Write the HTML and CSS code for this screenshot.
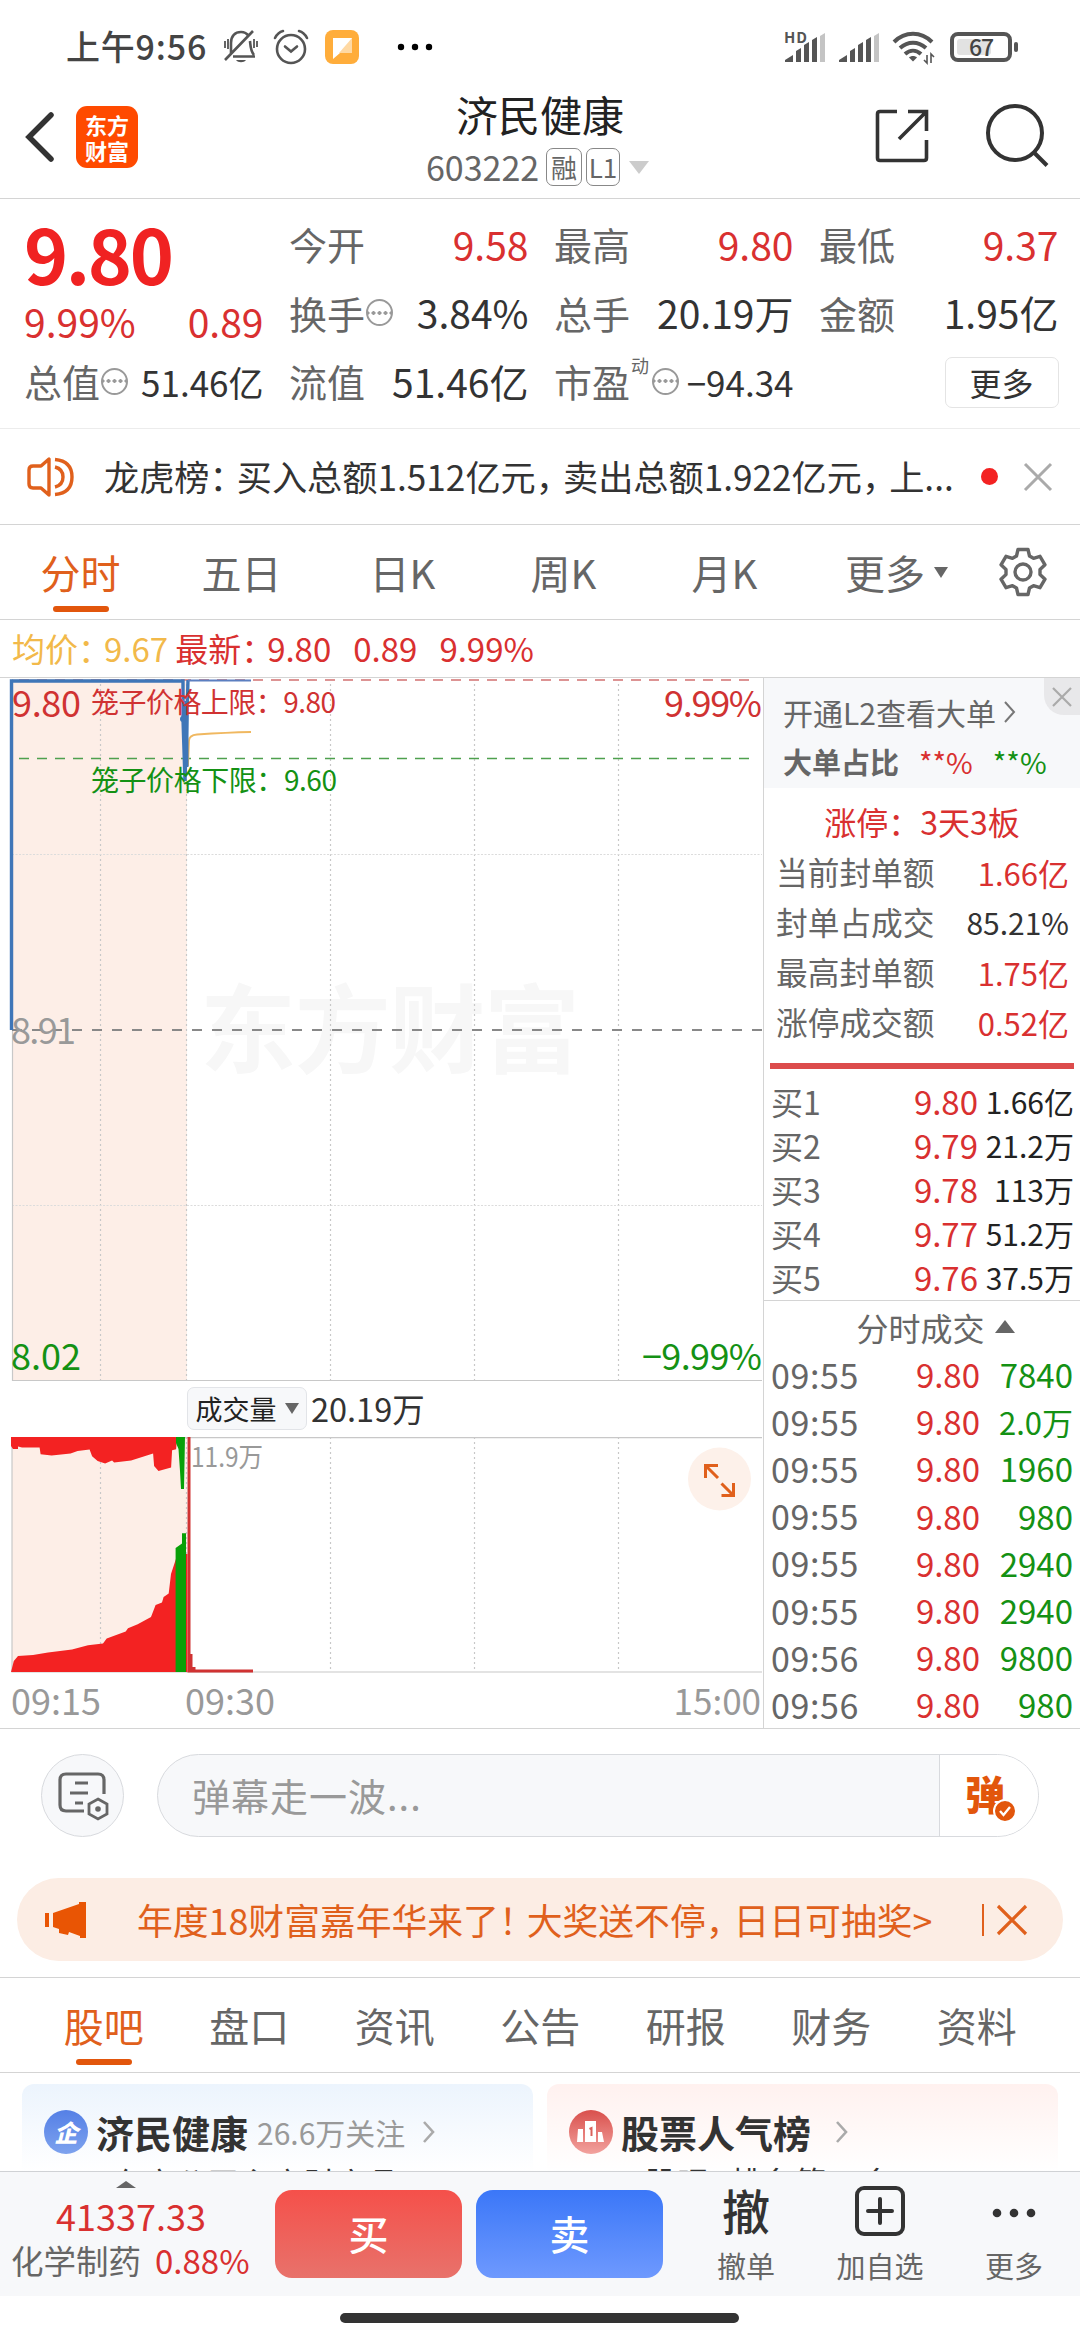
FILE: index.html
```html
<!DOCTYPE html>
<html lang="zh-CN">
<head>
  <meta charset="UTF-8" />
  <title>济民健康 603222</title>
  <link rel="stylesheet" href="styles.css">
</head>
<body>
  <div class="statusbar">
    <span class="clock">上午9:56</span>
    <svg class="st-bell" width="36" height="36" viewBox="0 0 36 36" fill="none" stroke="#555" stroke-width="2.6">
      <path d="M8 25V14C8 7 12 3 18 3c3 0 6 1.500 7.500 4M27 12c.6 6 .5 10 4 14M10 27.500h22M30 2 2 31"/>
      <path d="M2 12v7M5 10v10M31 10v9M34 12v6" stroke-width="1.800"/>
      <path d="M13 31h10c-2 3-8 3-10 0z" fill="#555" stroke="none"/>
    </svg>
    <svg class="st-alarm" width="36" height="36" viewBox="0 0 36 36" fill="none" stroke="#555" stroke-width="2.600">
      <circle cx="18" cy="20" r="14"/>
      <path d="M12 17.500l6 5 6-5M2 9c2-4 4-6 8-7M34 9c-2-4-4-6-8-7" stroke-linecap="round"/>
    </svg>
    <svg class="st-app" width="34" height="34" viewBox="0 0 34 34">
      <rect width="34" height="34" rx="8" fill="#ffad3b"/>
      <path d="M8 8h19v15H15l-7 6z" fill="#fff"/><path d="M27 8v15H14z" fill="#ffd9a3"/>
    </svg>
    <svg width="36" height="8" viewBox="0 0 36 8"><circle cx="4" cy="4" r="3.200"/><circle cx="18" cy="4" r="3.200"/><circle cx="32" cy="4" r="3.200"/></svg>
    <div class="st-right">
      <svg width="42" height="34" viewBox="0 0 42 34" fill="#555">
        <text x="0" y="13" font-size="15" font-weight="700" textLength="23">HD</text>
        <path d="M1 32v-2l8-5v7zM12 32V21l5-3v14zM20 32V15l5-3v20zM28 32V10l5-3v25z"/><path d="M36 32V6l5-3v29z" fill="#c4c4c4"/>
      </svg>
      <svg width="42" height="34" viewBox="0 0 42 34" fill="#555">
        <path d="M1 32v-2l8-5v7zM12 32V21l5-3v14zM20 32V15l5-3v20zM28 32V10l5-3v25z"/><path d="M36 32V6l5-3v29z" fill="#c4c4c4"/>
      </svg>
      <svg width="44" height="36" viewBox="0 0 44 36" fill="none" stroke="#555" stroke-width="4">
        <path d="M2 13c11-11 27-11 38 0M8 19c8-7 18-7 26 0M13 25c5-4.500 11-4.500 16 0"/>
        <path d="M17 28.500c2-2 6-2 8 0l-4 4z" fill="#555" stroke="none"/>
        <path d="M35 26v8l-3-3M39 34v-9l3 3" stroke-width="1.600"/>
      </svg>
      <svg class="battery" width="70" height="32" viewBox="0 0 70 32">
        <rect x="2" y="3" width="58" height="26" rx="6" fill="#fff" stroke="#555" stroke-width="4"/>
        <rect x="7" y="8" width="34" height="16" rx="3" fill="#e2e2e2"/>
        <rect x="64" y="11" width="4" height="10" rx="2" fill="#555"/>
        <text x="19" y="24.500" font-size="23" font-weight="500" fill="#444" textLength="25">67</text>
      </svg>
    </div>
  </div>

  <header class="header">
    <svg class="back" width="30" height="52" viewBox="0 0 30 52" fill="none" stroke="#333" stroke-width="5.500" stroke-linecap="round"><path d="M26 4 4 26l22 22"/></svg>
    <div class="logo"><span>东方</span><span>财富</span></div>
    <div class="title">
      <h1>济民健康</h1>
      <div class="sub"><span class="code">603222</span><span class="tag">融</span><span class="tag l1">L1</span><i class="tri-down"></i></div>
    </div>
    <svg class="share" width="54" height="54" viewBox="0 0 54 54" fill="none" stroke="#333" stroke-width="3.600"><path d="M22 2.500H5q-2.500 0-2.500 2.500v44q0 2.500 2.500 2.500h44q2.500 0 2.500-2.500V31M33 2.500h18.500V22M51 3 24 30"/></svg>
    <svg class="search" width="64" height="64" viewBox="0 0 64 64" fill="none" stroke="#333" stroke-width="4"><circle cx="29" cy="29" r="27"/><path d="M47.500 48 61 61.500"/></svg>
  </header>

  <section class="quote">
    <div class="col col-price">
      <div class="price">9.80</div>
      <div class="row change red"><span>9.99%</span><span>0.89</span></div>
      <div class="row"><label>总值<i class="more-dot"></i></label><span class="sm">51.46亿</span></div>
    </div>
    <div class="col">
      <div class="row"><label>今开</label><span class="red">9.58</span></div>
      <div class="row"><label>换手<i class="more-dot"></i></label><span>3.84%</span></div>
      <div class="row"><label>流值</label><span>51.46亿</span></div>
    </div>
    <div class="col">
      <div class="row"><label>最高</label><span class="red">9.80</span></div>
      <div class="row"><label>总手</label><span>20.19万</span></div>
      <div class="row"><label>市盈<sup>动</sup><i class="more-dot"></i></label><span class="sm">−94.34</span></div>
    </div>
    <div class="col">
      <div class="row"><label>最低</label><span class="red">9.37</span></div>
      <div class="row"><label>金额</label><span>1.95亿</span></div>
      <div class="row end"><button class="btn-more">更多</button></div>
    </div>
  </section>

  <section class="notice">
    <svg class="speaker" width="48" height="42" viewBox="0 0 48 42" fill="none" stroke="#e0601c" stroke-width="3.400" stroke-linejoin="round"><path d="M22 3v36l-8-7H6q-4 0-4-4V14q0-4 4-4h8zM28 11q8 2 8 10t-8 10M28 3.500q17 1.500 17 17.500T28 38.500"/></svg>
    <p>龙虎榜<b>：</b>买入总额1.512亿元<b>，</b>卖出总额1.922亿元<b>，</b>上...</p>
    <i class="dot"></i>
    <svg width="28" height="28" viewBox="0 0 28 28" stroke="#aaa" stroke-width="3"><path d="M1 1l26 26M27 1 1 27"/></svg>
  </section>

  <nav class="tabs">
    <a class="on">分时</a><a>五日</a><a>日K</a><a>周K</a><a>月K</a>
    <a class="tab-more">更多<i class="tri-s"></i></a>
    <svg class="gear" width="50" height="50" viewBox="0 0 50 50" fill="none" stroke="#666" stroke-width="3.400" stroke-linejoin="round">
      <path d="M20 2.500h10l1.500 6.500 4 2.300 6.500-2 5 8.500-5 4.600v5.200l5 4.600-5 8.500-6.500-2-4 2.300-1.500 6.500H20l-1.500-6.500-4-2.300-6.500 2-5-8.500 5-4.600v-5.200l-5-4.600 5-8.500 6.500 2 4-2.300z"/><circle cx="25" cy="25" r="8"/>
    </svg>
  </nav>

  <div class="legend"><span class="avg">均价<b>：</b>9.67</span><span>最新<b>：</b>9.80</span><span>0.89</span><span>9.99%</span></div>

  <main class="board">
    <div class="charts">
      <!-- 分时走势 -->
      <svg width="763" height="703" viewBox="0 677 763 703">
        <rect x="12" y="678" width="175" height="701" fill="#fdeee7"/>
        <text class="mark" x="200" y="1064" font-size="96" font-weight="700" textLength="380">东方财富</text>
        <g stroke="#c8c8c8" stroke-width="1.200" stroke-dasharray="2 3">
          <path d="M100.500 678V1379M186.500 678V1379M330.500 678V1379M474.500 678V1379M618.500 678V1379"/>
          <path d="M12 853.500H762M12 1204.500H762" stroke-dasharray="2 1.500" stroke="#dcdcdc"/>
        </g>
        <path d="M12.500 678V1379.500H762" fill="none" stroke="#c8c8c8" stroke-width="1.200"/>
        <path d="M19 679H749" stroke="#dd9494" stroke-width="2" stroke-dasharray="10 8"/>
        <path d="M12 1029H762" stroke="#888" stroke-width="2" stroke-dasharray="10 10"/>
        <path d="M19 757.500H749" stroke="#4ea04e" stroke-width="1.500" stroke-dasharray="10 8"/>
        <path d="M188 765l1-25q0-6 8-6.500 30-2 54-2.500" fill="none" stroke="#f0b860" stroke-width="1.800"/>
        <path d="M11.500 1029V680H183V718L185 780L188 679" fill="none" stroke="#3f76b8" stroke-width="3.400"/>
        <path d="M186 700V766" stroke="#3f76b8" stroke-width="5"/>
        <path d="M188 679.500H251" stroke="#5c7fc0" stroke-width="2"/>
        <circle cx="183" cy="718" r="3" fill="#3f76b8"/>
        <g fill="#d03232">
          <text x="12" y="716" font-size="36" textLength="69">9.80</text>
          <text x="91" y="712" font-size="28" textLength="245">笼子价格上限：9.80</text>
          <text x="664" y="716" font-size="36" textLength="98">9.99%</text>
        </g>
        <text x="11" y="1043" font-size="36" fill="#999" textLength="65">8.91</text>
        <g fill="#149114">
          <text x="91" y="790" font-size="28" textLength="246">笼子价格下限：9.60</text>
          <text x="11" y="1369" font-size="36" textLength="70">8.02</text>
          <text x="642" y="1369" font-size="36" textLength="120">−9.99%</text>
        </g>
      </svg>
      <div class="vol-head"><span class="vol-pick">成交量<i class="tri-s"></i></span><span>20.19万</span></div>
      <!-- 成交量 -->
      <svg width="763" height="236" viewBox="0 0 763 236">
        <rect x="12" y="0" width="175" height="235" fill="#fdeee7"/>
        <path d="M100.500 0V235M186.500 0V235M330.500 0V235M474.500 0V235M618.500 0V235" stroke="#c8c8c8" stroke-width="1.200" stroke-dasharray="2 3"/>
        <path d="M762 .6H12V235H762" fill="none" stroke="#c8c8c8" stroke-width="1.200"/>
        <g fill="#f32222">
          <path d="M11 0V9l2 3h5V9.600l4 1h17.600l1 6.700 11 1.300 19-2 7-2.600 12-1.400 2.500 6.700 5.500 4.700 7.500 2.600 7-3.100 2 2.100 17-2.100 22-6.900 1 12.400 4.400 5 12.600-3.400 1-17.300 4-1 1-12.300z"/>
          <path d="M11 235l2.800-11 4.200-5 15-1 15-2.400 24-3 16-4.300 15-1.700 3.700-5 19-7 2.300-3.300 9.700-4 13.300-7.300 4.600-12 6.400-2.400 1.600-5.600 5.100-3.400 2.300-19.600 5.600-17V235zM186 117h1.500V235H186z"/>
          <path d="M187.500 0h3v217h2v13h3v2.500H253v3H187.500z" fill="#d03232"/>
        </g>
        <path d="M176 0h9l-1 52h-3l-1-18-1.500-22-2.500-6zM175.600 235V111l6.400-4.400V96.300h4V235z" fill="#08a008"/>
        <text x="191" y="29.500" font-size="27" fill="#999" textLength="72" lengthAdjust="spacingAndGlyphs">11.9万</text>
        <circle cx="719.500" cy="42" r="31.500" fill="#fdf1ea"/>
        <path d="M705.500 41V28.500H718M706 29l12 12M721.500 58.500H733.500V46M733 58 721.500 46.500" fill="none" stroke="#e0601c" stroke-width="3"/>
      </svg>
      <div class="axis"><span>09:15</span><span class="t930">09:30</span><span>15:00</span></div>
    </div>

    <aside class="side">
      <div class="l2">
        <div class="l2-open">开通L2查看大单<svg width="12" height="22" viewBox="0 0 12 22" fill="none" stroke="#777" stroke-width="2"><path d="M1 1l9 10-9 10"/></svg></div>
        <div class="l2-ratio"><b>大单占比</b><span class="red">**%</span><span class="green">**%</span></div>
        <div class="l2-close"><svg width="20" height="20" viewBox="0 0 20 20" stroke="#aaa" stroke-width="2.200"><path d="M1 1l18 18M19 1 1 19"/></svg></div>
      </div>
      <div class="limit">涨停：3天3板</div>
      <div class="kv"><span>当前封单额</span><span class="red">1.66亿</span></div>
      <div class="kv"><span>封单占成交</span><span class="pct">85.21%</span></div>
      <div class="kv"><span>最高封单额</span><span class="red">1.75亿</span></div>
      <div class="kv"><span>涨停成交额</span><span class="red">0.52亿</span></div>
      <div class="redbar"></div>
      <div class="bids">
        <div class="bid"><span>买1</span><span class="red">9.80</span><span>1.66亿</span></div>
        <div class="bid"><span>买2</span><span class="red">9.79</span><span>21.2万</span></div>
        <div class="bid"><span>买3</span><span class="red">9.78</span><span>113万</span></div>
        <div class="bid"><span>买4</span><span class="red">9.77</span><span>51.2万</span></div>
        <div class="bid"><span>买5</span><span class="red">9.76</span><span>37.5万</span></div>
      </div>
      <div class="ticks-head">分时成交<i class="tri-up"></i></div>
      <div class="ticks">
        <div class="tick"><span>09:55</span><span class="red">9.80</span><span class="green">7840</span></div>
        <div class="tick"><span>09:55</span><span class="red">9.80</span><span class="green wan">2.0万</span></div>
        <div class="tick"><span>09:55</span><span class="red">9.80</span><span class="green">1960</span></div>
        <div class="tick"><span>09:55</span><span class="red">9.80</span><span class="green">980</span></div>
        <div class="tick"><span>09:55</span><span class="red">9.80</span><span class="green">2940</span></div>
        <div class="tick"><span>09:55</span><span class="red">9.80</span><span class="green">2940</span></div>
        <div class="tick"><span>09:56</span><span class="red">9.80</span><span class="green">9800</span></div>
        <div class="tick"><span>09:56</span><span class="red">9.80</span><span class="green">980</span></div>
      </div>
    </aside>
  </main>

  <section class="danmu">
    <div class="dm-set">
      <svg width="52" height="48" viewBox="0 0 52 48" fill="none" stroke="#666" stroke-width="3.200"><path d="M27 39H9q-6 0-6-6V8q0-6 6-6h32q6 0 6 6v14M18 11h13M13 21h18M18 31h8"/><path d="M41 27l9 5v10l-9 5-9-5V32z" stroke-width="2.800"/><circle cx="41" cy="37" r="2.800" fill="#666" stroke="none"/></svg>
    </div>
    <div class="dm-input"><span>弹幕走一波...</span>
      <div class="dm-btn"><b>弹</b><svg width="24" height="24" viewBox="0 0 24 24"><circle cx="12" cy="12" r="11" fill="#e2560c" stroke="#fff" stroke-width="2"/><path d="M7 12l3.500 4L17 8" fill="none" stroke="#fff" stroke-width="2.400"/></svg></div>
    </div>
  </section>

  <section class="banner">
    <svg class="horn" width="42" height="38" viewBox="0 0 42 38" fill="#e95504"><path d="M0 12h4v14H0zM8 12 34 3V1h7v36h-6v-2l-11-4-1 3-9-2v-4l-6-2z"/></svg>
    <p>年度18财富嘉年华来了<b>！</b>大奖送不停<b>，</b>日日可抽奖&gt;</p>
    <i class="sep"></i>
    <svg width="30" height="30" viewBox="0 0 30 30" stroke="#e0601c" stroke-width="3.200"><path d="M1 1l28 28M29 1 1 29"/></svg>
  </section>

  <nav class="tabs2">
    <a class="on">股吧</a><a>盘口</a><a>资讯</a><a>公告</a><a>研报</a><a>财务</a><a>资料</a>
  </nav>

  <section class="cards">
    <div class="card blue">
      <div class="card-head">
        <span class="ico">企</span><h2>济民健康</h2><small>26.6万关注</small>
        <svg width="14" height="24" viewBox="0 0 14 24" fill="none" stroke="#aaa" stroke-width="2.600"><path d="M2 2l9 10-9 10"/></svg>
      </div>
      <p>东方公司主方财产品</p>
    </div>
    <div class="card pink">
      <div class="card-head">
        <span class="ico"><svg width="28" height="24" viewBox="0 0 28 24" fill="#fff"><path d="M1 9h5v13H0zM8 1h11v21H8zM21 12h4l2 10h-6z"/><path d="M12.500 9l2-1v8" fill="none" stroke="#d9625c" stroke-width="2"/></svg></span><h2>股票人气榜</h2>
        <svg class="go" width="14" height="24" viewBox="0 0 14 24" fill="none" stroke="#aaa" stroke-width="2.600"><path d="M2 2l9 10-9 10"/></svg>
      </div>
      <p>股吧<span class="rank">排名第<em>44</em>名</span></p>
    </div>
  </section>

  <footer class="tradebar">
    <div class="index">
      <i class="tri-up flat"></i>
      <div class="red idx">41337.33</div>
      <div class="sector">化学制药<span class="red">0.88%</span></div>
    </div>
    <button class="trade buy">买</button>
    <button class="trade sell">卖</button>
    <div class="act cancel"><b>撤</b><span>撤单</span></div>
    <div class="act add">
      <svg width="52" height="52" viewBox="0 0 52 52" fill="none" stroke="#333" stroke-width="4"><rect x="3" y="3" width="46" height="46" rx="7"/><path d="M14 26h24M26 14v24" stroke-linecap="round"/></svg>
      <span>加自选</span>
    </div>
    <div class="act etc">
      <svg width="44" height="52" viewBox="0 0 44 52" fill="#333"><circle cx="5" cy="28" r="4.300"/><circle cx="22" cy="28" r="4.300"/><circle cx="39" cy="28" r="4.300"/></svg>
      <span>更多</span>
    </div>
  </footer>
  <div class="home"><i></i></div>
</body>
</html>
```

FILE: styles.css
```css
* {
  box-sizing: border-box;
}

body {
  width: 1080px;
  height: 2340px;
  margin: 0;
  overflow: hidden;
  display: flex;
  flex-direction: column;
  background: #fff;
  color: #333;
  font-family: "Noto Sans CJK SC", "Noto Sans", sans-serif;
  line-height: 1;
}

body > * { flex-shrink: 0; }
h1, h2, p { margin: 0; font-weight: 400; }
svg { display: block; flex-shrink: 0; overflow: visible; }
span, p, a, label { white-space: nowrap; }
button { font-family: inherit; border: none; padding: 0; }

.red { color: #d93030; }
.green { color: #149114; }

.tri-down, .tri-s {
  border: 10px solid transparent;
  border-top: 13px solid #ccc;
  border-bottom: 0;
}
.tri-s { border-width: 11px 7px 0; border-top-color: #666; }
.tri-up {
  border: 10px solid transparent;
  border-bottom: 13px solid #666;
  border-top: 0;
}

/* 状态栏 */
.statusbar {
  height: 90px;
  padding: 4px 60px 0 66px;
  display: flex;
  align-items: center;
}
.clock { font-size: 34px; font-weight: 500; letter-spacing: .8px; color: #444; width: 157px; margin-top: -2px; }
.st-alarm { margin-left: 14px; }
.st-app { margin: 0 38px 0 16px; }
.st-right { margin-left: auto; display: flex; align-items: center; gap: 12px; }
.battery { margin-left: 2px; }

/* 标题 */
.header {
  height: 109px;
  border-bottom: 1px solid #d4d4d4;
  display: flex;
  align-items: flex-start;
  padding-left: 25px;
}
.back { margin-top: 21px; }
.logo {
  width: 62px;
  height: 62px;
  margin: 16px 0 0 21px;
  border-radius: 11px;
  background: #ff4a00;
  color: #fff;
  font-size: 22px;
  font-weight: 700;
  display: flex;
  flex-direction: column;
  align-items: center;
  justify-content: center;
  gap: 4px;
}
.title { margin-left: 288px; width: 226px; }
.title h1 { font-size: 42px; color: #222; margin: 3px 0 0 30px; white-space: nowrap; }
.sub { display: flex; align-items: center; margin-top: 13px; color: #666; height: 38px; }
.code { font-size: 34px; width: 120px; }
.tag {
  width: 36px;
  height: 38px;
  border: 1.5px solid #888;
  border-radius: 7px;
  font-size: 26px;
  display: flex;
  align-items: center;
  justify-content: center;
  margin-right: 4px;
}
.l1 { width: 34px; margin-right: 9px; }
.share { margin: 19px 0 0 223px; }
.search { margin: 14px 0 0 57px; }

/* 报价 */
.quote {
  height: 230px;
  padding: 11px 0 0 24px;
  border-bottom: 1px solid #ececec;
  display: flex;
  gap: 25.5px;
}
.col { width: 239.5px; font-size: 39px; }
.row { height: 68.5px; display: flex; align-items: center; justify-content: space-between; }
.row label { font-size: 38px; color: #666; display: flex; align-items: center; }
.row .sm { font-size: 35px; }
.row sup { font-size: 18px; align-self: flex-start; margin: -6px 0 0 1px; }
.end { justify-content: flex-end; }
.price { height: 80px; padding-top: 5px; font-size: 75px; font-weight: 700; letter-spacing: -2.4px; color: #f02222; }
.change { height: 57px; padding-top: 5px; }
.more-dot {
  width: 27px;
  height: 27px;
  border: 2px solid #999;
  border-radius: 50%;
  background: radial-gradient(circle, #999 1.6px, transparent 2px) 50% 50% / 6px 6px repeat-x;
  margin: 0 0 0 1px;
}
.row sup + .more-dot { margin-left: 3px; }
.btn-more {
  width: 114px;
  height: 51px;
  background: #fff;
  border: 1.5px solid #e4e4e4;
  border-radius: 7px;
  font-size: 32px;
  color: #333;
  margin-top: 2px;
}

/* 公告 */
.notice {
  height: 96px;
  padding: 0 28px 0 27px;
  border-bottom: 1px solid #d4d4d4;
  display: flex;
  align-items: center;
}
.notice p { font-size: 35.2px; margin: -1px 0 0 29px; width: 877px; }
.notice b, .legend b, .banner b { font-weight: 400; letter-spacing: -8px; }
.legend b { letter-spacing: -7px; }
.dot { width: 17px; height: 17px; border-radius: 50%; background: #f32222; margin-right: auto; }

/* 周期 */
.tabs { height: 95px; border-bottom: 1px solid #d4d4d4; display: flex; align-items: center; }
.tabs a {
  width: 161px;
  height: 100%;
  font-size: 40px;
  color: #666;
  display: flex;
  align-items: center;
  justify-content: center;
  position: relative;
}
.tabs .on, .tabs2 .on { color: #e0601c; }
.on::after {
  content: "";
  position: absolute;
  left: 50%;
  bottom: 7px;
  width: 56px;
  height: 6px;
  margin-left: -28px;
  border-radius: 3px;
  background: #e2560c;
}
.tabs .tab-more { width: 183px; gap: 9px; }
.gear { margin-left: 10px; }

.legend {
  height: 58px;
  padding-left: 12px;
  border-bottom: 1px solid #d4d4d4;
  display: flex;
  align-items: center;
  gap: 22px;
  font-size: 33px;
  color: #d93030;
}
.avg { color: #f2b94a; margin-right: -15px; }

/* 图表 */
.board { height: 1051px; display: flex; border-bottom: 1px solid #d4d4d4; }
.charts { width: 763px; }
.mark { fill: #f7f7f7; }
.vol-head {
  height: 56px;
  padding-left: 187px;
  display: flex;
  align-items: center;
  gap: 4px;
  font-size: 32.5px;
  padding-bottom: 1px;
}
.vol-pick {
  width: 120px;
  height: 43px;
  border: 1.5px solid #e2e4e8;
  border-radius: 7px;
  background: #f7f8fa;
  font-size: 27px;
  color: #222;
  display: flex;
  align-items: center;
  justify-content: center;
  gap: 8px;
}
.axis { height: 56px; padding: 0 2px 4px 11px; display: flex; align-items: center; font-size: 36px; color: #999; }
.axis span:last-child { font-size: 35px; }
.axis .t930 { margin: 0 auto 0 84px; }

.side { width: 317px; border-left: 1px solid #d4d4d4; }
.l2 { height: 110px; background: #f7f8fa; position: relative; padding: 19px 0 0 19px; color: #666; }
.l2-open { font-size: 30px; display: flex; align-items: center; gap: 8px; }
.l2-ratio { font-size: 29px; display: flex; align-items: center; gap: 20px; margin-top: 20px; }
.l2-close {
  position: absolute;
  top: 0;
  right: 0;
  width: 36px;
  height: 37px;
  border-bottom-left-radius: 20px;
  background: #e8e8ea;
  display: flex;
  align-items: center;
  justify-content: center;
}
.limit { height: 59px; padding-top: 17px; font-size: 32px; color: #d93030; text-align: center; }
.kv { height: 50px; padding: 0 11px 0 12px; display: flex; align-items: center; justify-content: space-between; font-size: 31px; }
.kv span:first-child { color: #666; font-size: 31.7px; }
.kv .pct { font-size: 30px; }
.redbar { height: 6px; background: #dc4c4c; margin: 16px 6px 10px; }
.bids { height: 222px; border-bottom: 1px solid #d4d4d4; }
.bid, .tick { display: grid; grid-template-columns: 102px 1fr 93px; padding: 0 7px; align-items: center; font-size: 33px; }
.bid { height: 44.1px; grid-template-columns: 102px 1fr 96px; padding-right: 6px; }
.bid span, .tick span { text-align: right; }
.bid span:first-child, .tick span:first-child { text-align: left; color: #666; font-size: 32px; }
.bid span:last-child { color: #222; font-size: 30px; }
.ticks-head { height: 50px; display: flex; align-items: center; justify-content: center; gap: 10px; color: #666; font-size: 32px; padding: 1px 0 0 27px; }
.tick { height: 47.2px; }
.tick .wan { font-size: 31px; }
.tick span:first-child { font-size: 34px; letter-spacing: .6px; }

/* 弹幕 */
.danmu { height: 149px; padding: 25px 41px 0; display: flex; gap: 33px; }
.dm-set {
  width: 83px;
  height: 83px;
  border: 1.5px solid #d8dade;
  border-radius: 50%;
  background: #f7f8fa;
  display: flex;
  align-items: center;
  justify-content: center;
}
.dm-input {
  width: 882px;
  height: 83px;
  border: 1.5px solid #d8dade;
  border-radius: 42px;
  background: #f7f8fa;
  display: flex;
  align-items: center;
  justify-content: space-between;
  overflow: hidden;
  padding-left: 34px;
  color: #999;
  font-size: 38px;
  letter-spacing: 1px;
}
.dm-input > span { margin-top: -2px; }
.dm-btn {
  width: 99px;
  height: 100%;
  border-left: 1.5px solid #d8dade;
  background: #fff;
  color: #e2560c;
  position: relative;
  padding: 18px 0 0 25px;
}
.dm-btn b { font-weight: 900; font-size: 40px; }
.dm-btn svg { position: absolute; left: 53px; top: 44px; }

.banner {
  height: 83px;
  margin: 0 17px 16px;
  padding: 0 36px 0 28px;
  border-radius: 42px;
  background: #fcede4;
  display: flex;
  align-items: center;
  color: #e0601c;
}
.banner p { font-size: 35.8px; margin-left: 50px; width: 845px; }
.sep { width: 1.5px; height: 32px; background: #e0601c; margin-right: auto; }

.tabs2 { height: 96px; border-top: 1px solid #d4d4d4; border-bottom: 1px solid #d4d4d4; padding-left: 31px; display: flex; }
.tabs2 a {
  width: 145.5px;
  font-size: 40px;
  color: #666;
  display: flex;
  align-items: center;
  justify-content: center;
  position: relative;
}

.cards { height: 98px; padding: 11px 22px 0; display: flex; gap: 14px; overflow: hidden; }
.card { width: 511px; height: 150px; border-radius: 12px; padding: 26px 0 0 22px; }
.blue { background: linear-gradient(#ecf4fd, #fff 88px); }
.pink { background: linear-gradient(#fff1ef, #fff 88px); }
.card-head { display: flex; align-items: center; height: 44px; }
.card h2 { font-size: 38px; font-weight: 700; margin-left: 8px; white-space: nowrap; }
.card small { font-size: 30px; color: #999; margin: 0 17px 0 9px; white-space: nowrap; }
.card p { font-size: 31px; margin: 12px 0 0 68px; letter-spacing: 1px; }
.pink p { margin: 11px 0 0 76px; }
.rank { margin-left: 22px; }
.card em { font-style: normal; color: #e2560c; }
.go { margin-left: 24px; }
.ico {
  width: 44px;
  height: 44px;
  border-radius: 50%;
  color: #fff;
  font-size: 24px;
  font-weight: 900;
  display: flex;
  align-items: center;
  justify-content: center;
}
.blue .ico { background: linear-gradient(#5580e6, #7da2ee); font-style: italic; }
.pink .ico { background: linear-gradient(#d9504c, #f2a29e); }

/* 底部交易栏 */
.tradebar { height: 125px; border-top: 1px solid #d0d2d5; background: #f7f8fa; display: flex; align-items: flex-start; }
.index { width: 275px; padding: 9px 0 0 11px; }
.flat { display: block; width: 20px; border-width: 0 10px 7px; margin-left: 105px; }
.idx { font-size: 36px; margin: 9px 0 0 45px; }
.sector { font-size: 32.5px; color: #666; margin-top: 11px; display: flex; align-items: center; gap: 14px; }
.sector span { font-size: 33px; }
.trade {
  width: 187px;
  height: 88px;
  margin: 18px 14px 0 0;
  padding-bottom: 3px;
  border-radius: 17px;
  color: #fff;
  font-size: 40px;
  font-weight: 500;
}
.buy { background: linear-gradient(#f5504a, #e8726b); }
.sell { background: linear-gradient(#3b77f8, #6e99fe); }
.act { display: flex; flex-direction: column; align-items: center; font-size: 29px; color: #666; padding-top: 13px; height: 124px; width: 90px; }
.act b { font-size: 48px; font-weight: 500; color: #333; height: 52px; }
.act span { margin-top: 14px; }
.cancel { margin-left: 24px; }
.add { margin-left: 44px; }
.etc { margin-left: 44px; }

.home { padding: 17px 0 0 340px; }
.home i { display: block; width: 399px; height: 10px; border-radius: 5px; background: #333; }
```
